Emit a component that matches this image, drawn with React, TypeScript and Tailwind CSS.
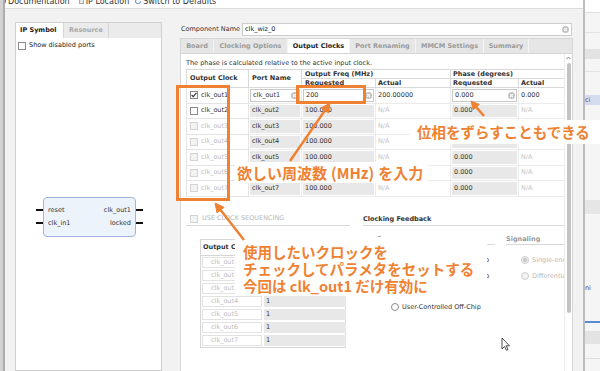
import React from 'react';

const ROWS = [1, 2, 3, 4, 5, 6, 7];
const GRID = 'grid grid-cols-[62px_53px_74px_75px_68px_46px]';
const TABS = [
  { name: 'Board', w: 'w-[33px]' },
  { name: 'Clocking Options', w: 'w-[74px]' },
  { name: 'Output Clocks', w: 'w-[62px]', active: true },
  { name: 'Port Renaming', w: 'w-[66px]' },
  { name: 'MMCM Settings', w: 'w-[68px]' },
  { name: 'Summary', w: 'w-[45px]' },
];

function Clear() {
  return (
    <svg width="7" height="7" viewBox="0 0 10 10" className="shrink-0">
      <circle cx="5" cy="5" r="5" fill="#c2c2c2" />
      <path d="M3.1 3.1 L6.9 6.9 M6.9 3.1 L3.1 6.9" stroke="#fff" strokeWidth="1.5" />
    </svg>
  );
}

function Check({ on = false, off = false }: { on?: boolean; off?: boolean }) {
  return (
    <span
      className={
        off
          ? 'w-[8px] h-[8px] shrink-0 border border-[#d4d4d4] bg-[#f3f3f3]'
          : 'w-[8px] h-[8px] shrink-0 border border-[#8a8a8a] bg-white flex items-center justify-center'
      }
    >
      {on && (
        <svg width="6" height="6" viewBox="0 0 6 6">
          <path d="M0.6 3 L2.3 4.7 L5.4 0.9" fill="none" stroke="#333" strokeWidth="1.1" />
        </svg>
      )}
    </span>
  );
}

function Radio({ on = false, dim = false }: { on?: boolean; dim?: boolean }) {
  return (
    <span
      className={
        dim
          ? 'w-[8px] h-[8px] rounded-full shrink-0 border border-[#cfcfcf] bg-[#f2f2f2] flex items-center justify-center'
          : 'w-[8px] h-[8px] rounded-full shrink-0 border border-[#8a8a8a] bg-white flex items-center justify-center'
      }
    >
      {on && <span className="w-[4px] h-[4px] rounded-full bg-[#c6c6c6]" />}
    </span>
  );
}

function Field({ v }: { v: string }) {
  return (
    <div className="p-[1px] border-r border-b border-[#ebebeb]">
      <div className="h-full bg-white border border-[#c9c9c9] flex items-center justify-between pl-[2px] pr-[1px]">
        <span>{v}</span>
        <Clear />
      </div>
    </div>
  );
}

function Gray({ v }: { v: string }) {
  return (
    <div className="p-[1px] border-r border-b border-[#ebebeb]">
      <div className="h-full bg-[#e8e8e8] flex items-center pl-[2px]">{v}</div>
    </div>
  );
}

function Plain({ v, dim }: { v: string; dim: boolean }) {
  return (
    <div className={`flex items-center pl-[2px] border-r border-b border-[#ebebeb] ${dim ? 'text-[#c4c4c4]' : ''}`}>
      {v}
    </div>
  );
}

function ClockTable() {
  return (
    <div className="mt-[1px] w-[378px]">
      <div className={`${GRID} grid-rows-[9px_9px] border-t border-l border-[#d9d9d9] font-bold text-[#333]`}>
        <div className="row-span-2 flex items-center pl-[3px] border-r border-b border-[#d9d9d9]">Output Clock</div>
        <div className="row-span-2 flex items-center pl-[3px] border-r border-b border-[#d9d9d9]">Port Name</div>
        <div className="col-span-2 flex items-center pl-[3px] border-r border-b border-[#d9d9d9]">Output Freq (MHz)</div>
        <div className="col-span-2 flex items-center pl-[2px] border-r border-b border-[#d9d9d9]">Phase (degrees)</div>
        <div className="flex items-center pl-[3px] border-r border-b border-[#d9d9d9]">Requested</div>
        <div className="flex items-center pl-[2px] border-r border-b border-[#d9d9d9]">Actual</div>
        <div className="flex items-center pl-[2px] border-r border-b border-[#d9d9d9]">Requested</div>
        <div className="flex items-center pl-[2px] border-r border-b border-[#d9d9d9]">Actual</div>
      </div>
      <div className={`${GRID} auto-rows-[15.5px] border-l border-[#e4e4e4] text-[#333]`}>
        {ROWS.map((n) => {
          const first = n === 1;
          const dis = n > 2;
          return (
            <React.Fragment key={n}>
              <div className="flex items-center gap-[3px] pl-[3px] border-r border-b border-[#e4e4e4]">
                <Check on={first} off={dis} />
                <span className={dis ? 'text-[#bdbdbd]' : 'text-[#333]'}>clk_out{n}</span>
              </div>
              {first ? <Field v="clk_out1" /> : <Gray v={`clk_out${n}`} />}
              {first ? <Field v="200" /> : <Gray v="100.000" />}
              <Plain v={first ? '200.00000' : 'N/A'} dim={!first} />
              {first ? <Field v="0.000" /> : <Gray v="0.000" />}
              <Plain v={first ? '0.000' : 'N/A'} dim={!first} />
            </React.Fragment>
          );
        })}
      </div>
    </div>
  );
}

function LowerSection() {
  return (
    <div className="flex mt-[16px]">
      <div className="w-[164px] shrink-0">
        <div className="h-[13px] flex items-center gap-[4px] pl-[4px] border-b border-[#d8d8d8] text-[#b8b8b8]">
          <Check off />
          <span>USE CLOCK SEQUENCING</span>
        </div>
        <div className="ml-[14px] mt-[13px] w-[146px] border border-[#d6d6d6]">
          <div className="h-[16px] grid grid-cols-[62px_84px] font-bold text-[#333] border-b border-[#d6d6d6]">
            <div className="flex items-center pl-[2px] border-r border-[#d6d6d6] overflow-hidden whitespace-nowrap">
              Output Clock
            </div>
            <div className="flex items-center pl-[2px] overflow-hidden whitespace-nowrap">Sequence Number</div>
          </div>
          {ROWS.map((n) => (
            <div key={n} className="h-[13px] grid grid-cols-[62px_84px]">
              <div className="p-[1px]">
                <div className="h-full border border-[#e2e2e2] flex items-center pl-[8px] text-[#bdbdbd]">clk_out{n}</div>
              </div>
              <div className="p-[1px]">
                <div className="h-full bg-[#e8e8e8] flex items-center pl-[2px] text-[#333]">1</div>
              </div>
            </div>
          ))}
        </div>
      </div>
      <div className="ml-[13px] w-[201px] shrink-0 pt-[2px]">
        <div className="h-[11px] flex items-center font-bold text-[#333] border-b border-[#d8d8d8]">Clocking Feedback</div>
        <div className="flex">
          <div className="ml-[14px] w-[118px] shrink-0">
            <div className="mt-[9px] h-[10px] flex items-center font-bold text-[#888] border-b border-[#d8d8d8]">Source</div>
            <div className="pt-[8px] text-[#333]">
              {['Automatic Control On-Chip', 'Automatic Control Off-Chip', 'User-Controlled On-Chip', 'User-Controlled Off-Chip'].map(
                (s) => (
                  <div key={s} className="h-[15.7px] flex items-center gap-[3px] pl-[14px] whitespace-nowrap">
                    <Radio />
                    <span>{s}</span>
                  </div>
                ),
              )}
            </div>
          </div>
          <div className="ml-[11px] flex-1 overflow-hidden">
            <div className="mt-[9px] h-[10px] flex items-center font-bold text-[#999] border-b border-[#d8d8d8]">Signaling</div>
            <div className="pt-[8px] text-[#b8b8b8]">
              <div className="h-[15.7px] flex items-center gap-[3px] pl-[15px] whitespace-nowrap">
                <Radio on dim />
                <span>Single-ended</span>
              </div>
              <div className="h-[15.7px] flex items-center gap-[3px] pl-[15px] whitespace-nowrap">
                <Radio dim />
                <span>Differential</span>
              </div>
            </div>
          </div>
        </div>
      </div>
    </div>
  );
}

export default function App() {
  return (
    <div className="relative w-[600px] h-[371px] overflow-hidden flex bg-[#f2f2f2] text-[#222] text-[6.5px] leading-[9px] font-['DejaVu_Sans',sans-serif]">
      {/* left window edge */}
      <div className="w-[5px] shrink-0 flex">
        <div className="w-[3px] bg-[#d2d2d2]" />
        <div className="w-[2px] bg-[#adadad]" />
      </div>

      <div className="w-[578px] shrink-0 flex flex-col">
        {/* toolbar, mostly scrolled out of view */}
        <div className="h-[9px] shrink-0 bg-white border-b border-[#dcdcdc] overflow-hidden">
          <div className="h-[14px] -mt-[6px] -ml-[5px] flex items-center text-[8px] text-[#333]">
            <svg width="6" height="6" viewBox="0 0 10 10" className="mr-[2px]">
              <circle cx="5" cy="5" r="5" fill="#2f6fc4" />
              <rect x="4.2" y="4" width="1.6" height="4" fill="#fff" />
            </svg>
            <span>Documentation</span>
            <span className="ml-[9px] mr-[2px] w-[5px] h-[5px] border border-[#aaa] bg-[#e8e8e8]" />
            <span>IP Location</span>
            <svg width="6" height="6" viewBox="0 0 10 10" className="ml-[6px] mr-[2px]">
              <path d="M8 3 A4 4 0 1 0 9 5.5" fill="none" stroke="#2f6fc4" strokeWidth="1.6" />
            </svg>
            <span>Switch to Defaults</span>
          </div>
        </div>

        <div className="flex flex-1 pt-[13px] min-h-0">
          <div className="w-[10px] shrink-0" />

          {/* IP symbol panel */}
          <div className="w-[147px] shrink-0 flex flex-col border border-[#cfcfcf] bg-white">
            <div className="h-[15px] flex bg-[#ebebeb] font-bold">
              <div className="w-[47px] bg-white flex items-center pl-[4px] text-[#222]">IP Symbol</div>
              <div className="w-[46px] flex items-center pl-[5px] text-[#a8a8a8] border-l border-r border-[#d6d6d6]">Resource</div>
            </div>
            <div className="flex items-center gap-[3px] pl-[2px] mt-[3px] h-[9px]">
              <Check />
              <span>Show disabled ports</span>
            </div>
            <div className="ml-[20px] mt-[147px] flex">
              <div className="w-[7px] flex flex-col pt-[12px] gap-[11px]">
                <div className="h-[2px] bg-[#111]" />
                <div className="h-[2px] bg-[#111]" />
              </div>
              <div className="w-[93px] h-[40px] rounded-[4px] border border-[#9fb6d8] bg-[#edf3fb] flex flex-col justify-center gap-[4px] px-[4px] text-[#333]">
                <div className="flex justify-between">
                  <span>reset</span>
                  <span>clk_out1</span>
                </div>
                <div className="flex justify-between">
                  <span>clk_in1</span>
                  <span>locked</span>
                </div>
              </div>
              <div className="w-[7px] flex flex-col pt-[12px] gap-[11px]">
                <div className="h-[2px] bg-[#111]" />
                <div className="h-[2px] bg-[#111]" />
              </div>
            </div>
          </div>

          <div className="w-[18px] shrink-0" />

          {/* configuration area */}
          <div className="w-[393px] shrink-0 flex flex-col">
            <div className="h-[13px] mt-[1px] flex items-center">
              <div className="w-[62px] pl-[1px] text-[#333]">Component Name</div>
              <div className="w-[330px] h-full bg-white border border-[#cdcdcd] flex items-center justify-between pl-[2px] pr-[2px]">
                <span>clk_wiz_0</span>
                <Clear />
              </div>
            </div>
            <div className="h-[16px] mt-[2px] flex bg-[#e6e6e6] border border-[#d6d6d6] font-bold">
              {TABS.map((t) => (
                <div
                  key={t.name}
                  className={`${t.w} shrink-0 flex items-center justify-center border-r border-[#f4f4f4] ${
                    t.active ? 'bg-white text-[#222]' : 'text-[#9a9a9a]'
                  }`}
                >
                  {t.name}
                </div>
              ))}
            </div>
            <div className="flex-1 min-h-0 flex bg-white border-l border-r border-[#d6d6d6] overflow-hidden">
              <div className="w-[383px] shrink-0 pl-[5px] pt-[4px]">
                <div className="h-[10px] flex items-center text-[#333]">
                  The phase is calculated relative to the active input clock.
                </div>
                <ClockTable />
                <LowerSection />
              </div>
              <div className="w-[8px] shrink-0 flex flex-col items-center border-l border-[#ececec]">
                <svg width="5" height="4" viewBox="0 0 5 4" className="mt-[2px]">
                  <path d="M0.5 3.2 L2.5 1 L4.5 3.2" fill="none" stroke="#777" strokeWidth="0.9" />
                </svg>
                <div className="mt-[3px] w-[4px] h-[250px] rounded-[2px] bg-[#c3c3c3]" />
              </div>
            </div>
          </div>

          <div className="w-[10px] shrink-0" />
        </div>
      </div>

      {/* neighbouring window edge */}
      <div className="w-[2px] shrink-0 bg-[#bdbdbd]" />
      <div className="w-[15px] shrink-0 flex flex-col bg-[#f5f5f5] text-[6.5px]">
        <div className="h-[13px] bg-white border-b border-[#dedede]" />
        <div className="h-[20px] border-b border-[#e2e2e2]" />
        <div className="mt-[16px] h-[10px] bg-[#e3e3e3]" />
        <div className="mt-[12px] border-b border-[#e2e2e2]" />
        <div className="mt-[23px] h-[10px] bg-[#d6dcef] text-[#4b55a0] leading-[10px]">ci</div>
        <div className="mt-[95px] h-[14px] bg-[#e6e6e6]" />
        <div className="mt-[70px] text-[#4b3f7a] leading-[9px]">ni</div>
        <div className="mt-[28px] h-[2px] bg-[#5b8cd4]" />
        <div className="mt-[8px] h-[13px] bg-[#e3e3e3]" />
        <div className="mt-[14px] border-b border-[#dedede]" />
      </div>

      {/* annotation overlays */}
      <div className="absolute left-[176px] top-[85px] w-[54px] h-[116px] border-[3px] border-[#ef8232]" />
      <div className="absolute left-[296px] top-[85px] w-[70px] h-[19px] border-[3px] border-[#ef8232]" />

      <div className="absolute left-[410px] top-[120px] w-[190px] h-[24px] bg-white flex items-center pl-[7px] text-[14.5px] leading-[20px] font-bold text-[#ef8232] font-['Noto_Sans_CJK_JP',sans-serif] whitespace-nowrap">
        位相をずらすこともできる
      </div>
      <div className="absolute left-[235px] top-[162px] w-[193px] h-[21px] bg-white flex items-center pl-[2px] text-[15px] leading-[20px] font-bold text-[#ef8232] font-['Noto_Sans_CJK_JP',sans-serif] whitespace-nowrap">
        欲しい周波数<span className="mx-[4px]">(MHz)</span>を入力
      </div>
      <div className="absolute left-[235px] top-[237px] w-[252px] h-[59px] bg-white pl-[8px] pt-[6px] text-[14.5px] leading-[17px] font-bold text-[#ef8232] font-['Noto_Sans_CJK_JP',sans-serif] whitespace-nowrap">
        <div>使用したいクロックを</div>
        <div>チェックしてパラメタをセットする</div>
        <div>今回は clk_out1 だけ有効に</div>
      </div>

      <svg className="absolute left-0 top-0 pointer-events-none" width="600" height="371" viewBox="0 0 600 371">
        <g stroke="#ef8232" strokeWidth="2.5" fill="#ef8232">
          <line x1="290" y1="161" x2="325" y2="110.4" />
          <polygon points="330,103 328.6,113 321.2,107.9" strokeWidth="1" />
          <line x1="484" y1="116" x2="476.2" y2="107.1" />
          <polygon points="471,101 479.3,104.5 473.2,109.7" strokeWidth="1" />
          <line x1="244" y1="240" x2="220.6" y2="210.1" />
          <polygon points="215,203 224.1,207.3 217,212.9" strokeWidth="1" />
        </g>
        <path d="M502 338 L502 349 L504.6 346.4 L506.4 350.2 L508 349.5 L506.2 345.8 L509.5 345.8 Z" fill="#fff" stroke="#222" strokeWidth="0.8" />
      </svg>
    </div>
  );
}
